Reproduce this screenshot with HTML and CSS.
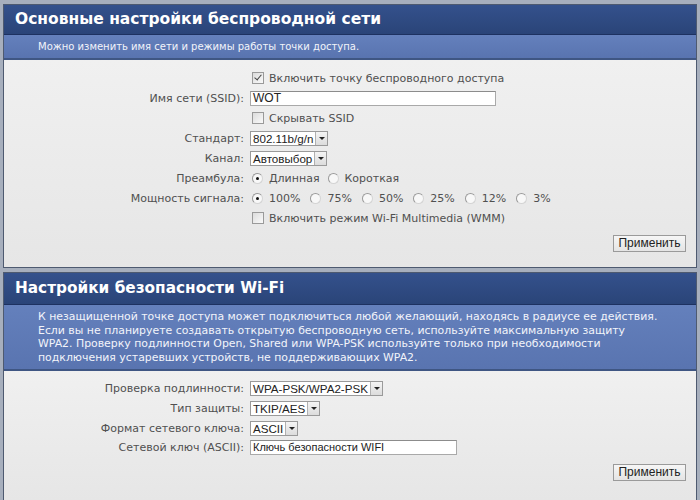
FILE: index.html
```html
<!DOCTYPE html>
<html>
<head>
<meta charset="utf-8">
<link rel="stylesheet" href="styles.css">
</head>
<body>
<div class="panel">
  <div class="title">Основные настройки беспроводной сети</div>
  <div class="sub">Можно изменить имя сети и режимы работы точки доступа.</div>
  <div class="body body1">
    <div class="form">
      <div class="lbl"></div>
      <div class="ctl"><span class="cb checked"></span>Включить точку беспроводного доступа</div>
      <div class="lbl">Имя сети (SSID):</div>
      <div class="ctl"><span class="input ssid">WOT</span></div>
      <div class="lbl"></div>
      <div class="ctl"><span class="cb"></span>Скрывать SSID</div>
      <div class="lbl">Стандарт:</div>
      <div class="ctl"><span class="select"><span class="val">802.11b/g/n</span><span class="arr"></span></span></div>
      <div class="lbl">Канал:</div>
      <div class="ctl"><span class="select"><span class="val">Автовыбор</span><span class="arr"></span></span></div>
      <div class="lbl">Преамбула:</div>
      <div class="ctl"><span class="rb on"></span>Длинная<span class="rb"></span>Короткая</div>
      <div class="lbl">Мощность сигнала:</div>
      <div class="ctl power"><span class="rb on"></span>100%<span class="rb"></span>75%<span class="rb"></span>50%<span class="rb"></span>25%<span class="rb"></span>12%<span class="rb"></span>3%</div>
      <div class="lbl"></div>
      <div class="ctl"><span class="cb"></span>Включить режим Wi-Fi Multimedia (WMM)</div>
    </div>
    <div class="actions"><span class="btn">Применить</span></div>
  </div>
</div>
<div class="panel">
  <div class="title title2">Настройки безопасности Wi-Fi</div>
  <div class="sub desc">К незащищенной точке доступа может подключиться любой желающий, находясь в радиусе ее действия.<br>Если вы не планируете создавать открытую беспроводную сеть, используйте максимальную защиту<br>WPA2. Проверку подлинности Open, Shared или WPA-PSK используйте только при необходимости<br>подключения устаревших устройств, не поддерживающих WPA2.</div>
  <div class="body body2">
    <div class="form">
      <div class="lbl">Проверка подлинности:</div>
      <div class="ctl"><span class="select"><span class="val">WPA-PSK/WPA2-PSK</span><span class="arr"></span></span></div>
      <div class="lbl">Тип защиты:</div>
      <div class="ctl"><span class="select"><span class="val">TKIP/AES</span><span class="arr"></span></span></div>
      <div class="lbl">Формат сетевого ключа:</div>
      <div class="ctl"><span class="select"><span class="val">ASCII</span><span class="arr"></span></span></div>
      <div class="lbl">Сетевой ключ (ASCII):</div>
      <div class="ctl"><span class="input key">Ключь безопасности WIFI</span></div>
    </div>
    <div class="actions"><span class="btn">Применить</span></div>
  </div>
</div>
</body>
</html>
```
FILE: styles.css
```css
html, body { margin: 0; padding: 0; }
body {
  width: 700px;
  height: 500px;
  overflow: hidden;
  background: #a7afbd;
  padding: 4px 3px 0 3px;
  box-sizing: border-box;
  font-family: "DejaVu Sans", Verdana, sans-serif;
  font-size: 11px;
  color: #505050;
}
.panel {
  border: 1px solid #4e5a70;
  margin-bottom: 4px;
  background: #ececec;
}
.title {
  height: 29px;
  line-height: 29px;
  padding-left: 11px;
  background: linear-gradient(#34518c, #2a4478);
  color: #fff;
  font-weight: bold;
  font-size: 15.5px;
  border-bottom: 1px solid #1d3160;
}
.title2 { font-size: 15.3px; height: 31px; line-height: 31px; }
.sub {
  background: linear-gradient(#6480bc, #5974b0);
  color: #f2f4fa;
  padding: 5px 0 5px 34px;
  height: 13px;
  line-height: 13px;
  font-size: 10px;
  border-bottom: 2px solid #3f5683;
}
.sub.desc {
  height: auto;
  padding: 5px 0 5px 34px;
  line-height: 13.5px;
  font-size: 10.9px;
}
.body {
  background: linear-gradient(#f0f0f0, #e6e6e6);
  padding: 8px 10px 0 0;
  box-sizing: border-box;
}
.body1 { height: 207px; }
.body2 { height: 129px; padding-top: 8px; }
.form {
  display: grid;
  grid-template-columns: 240px auto;
  grid-auto-rows: 20px;
  column-gap: 6px;
  align-items: center;
}
.body2 .form { grid-auto-rows: 19.7px; }
.lbl { text-align: right; white-space: nowrap; }
.ctl { display: flex; align-items: center; white-space: nowrap; }
.cb {
  width: 10px; height: 10px;
  border: 1px solid #9a9a9a;
  background: linear-gradient(135deg, #dcdcdc, #fafafa);
  margin: 0 5px 0 2px;
  position: relative;
  box-sizing: content-box;
}
.cb.checked::after {
  content: "";
  position: absolute;
  left: 3px; top: 0px;
  width: 3px; height: 6px;
  border: solid #444;
  border-width: 0 1.5px 1.5px 0;
  transform: rotate(40deg);
}
.rb {
  width: 9px; height: 9px;
  border-radius: 50%;
  border: 1px solid #d4d4d4;
  border-left-color: #9a9a9a;
  border-top-color: #9a9a9a;
  background: #f8f8f8;
  margin: 0 6px 0 8px;
  position: relative;
  box-sizing: content-box;
}
.power .rb { margin-left: 10px; }
.ctl .rb:first-child { margin-left: 2px; }
.rb.on::after {
  content: "";
  position: absolute;
  left: 3px; top: 3px;
  width: 3px; height: 3px;
  border-radius: 50%;
  background: #111;
}
.input {
  display: inline-block;
  box-sizing: border-box;
  height: 15px;
  line-height: 13px;
  border: 1px solid #a9a9a9;
  border-top-color: #8c8c8c;
  background: #fff;
  font-family: "Liberation Sans", Arial, sans-serif;
  font-size: 12px;
  color: #222;
  padding-left: 2px;
}
.ssid { width: 246px; }
.key { width: 207px; font-size: 11px; }
.select {
  display: inline-flex;
  align-items: stretch;
  height: 15px;
  box-sizing: border-box;
  border: 1px solid #9a9a9a;
  background: #fff;
  font-family: "Liberation Sans", Arial, sans-serif;
  font-size: 11.6px;
  color: #222;
}
.select .val { padding: 0 2px; line-height: 13px; }
.select .arr {
  width: 11px;
  border-left: 1px solid #b0b0b0;
  background: linear-gradient(#f4f4f4, #dcdcdc);
  position: relative;
}
.select .arr::after {
  content: "";
  position: absolute;
  left: 3px; top: 5px;
  border-left: 3px solid transparent;
  border-right: 3px solid transparent;
  border-top: 3px solid #222;
}
.actions {
  display: flex;
  justify-content: flex-end;
  margin-top: 7px;
}
.body2 .actions { margin-top: 6px; }
.btn {
  display: inline-block;
  width: 73px;
  height: 17px;
  box-sizing: border-box;
  line-height: 15px;
  text-align: center;
  border: 1px solid #9a9a9a;
  background: linear-gradient(#f6f6f6, #e4e4e4);
  font-family: "Liberation Sans", Arial, sans-serif;
  font-size: 12px;
  color: #222;
}
```
